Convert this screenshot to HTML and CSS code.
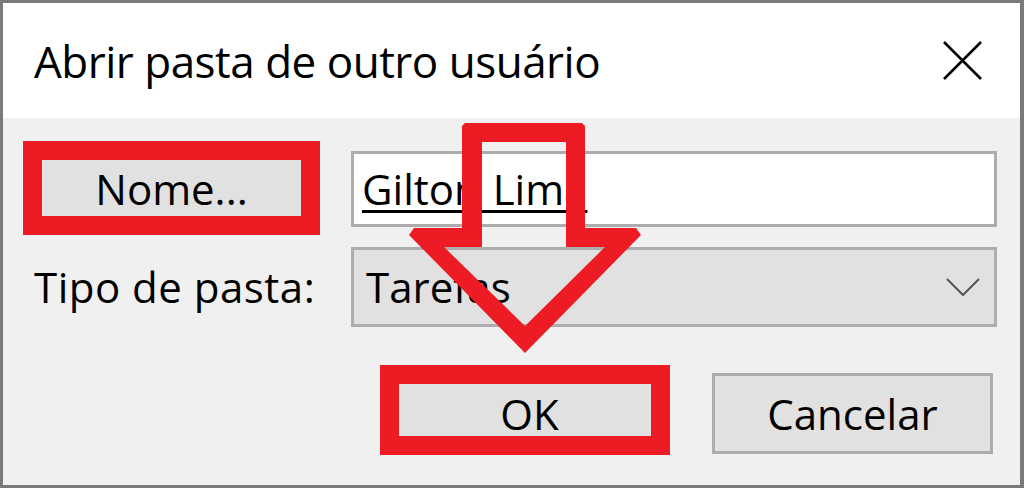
FILE: index.html
```html
<!DOCTYPE html>
<html>
<head lang="pt">
    <meta charset="UTF-8">
    <title>Abrir pasta de outro usuário</title>
    <link rel="stylesheet" href="styles.css">
</head>
<body>
    <div class="window">
        <div class="titlebar">
            <span class="title">Abrir pasta de outro usuário</span>
            <svg class="close" width="39" height="39" viewBox="0 0 39 39">
                <path d="M1 1L38 38M38 1L1 38" stroke="#000" stroke-width="2.6" fill="none"/>
            </svg>
        </div>
        <div class="content">
            <div class="form">
                <button class="btn marked mark-name">Nome...</button>
                <div class="field text-field"><u>Gilton Lima</u></div>
                <span class="label">Tipo de pasta:</span>
                <div class="field select">
                    <span>Tarefas</span>
                    <svg class="chevron" width="34" height="18" viewBox="0 0 34 18">
                        <path d="M1 1L17 17L33 1" stroke="#555" stroke-width="2" fill="none"/>
                    </svg>
                </div>
            </div>
            <div class="actions">
                <button class="btn marked mark-ok">OK</button>
                <button class="btn">Cancelar</button>
            </div>
        </div>
    </div>
    <!-- seta vermelha por cima do diálogo -->
    <svg class="arrow" width="1024" height="488" viewBox="0 0 1024 488">
        <path fill="#ed1c24" fill-rule="evenodd"
              d="M465 123H582L585 126V228H636L641 235L525 353L409 235L414 228H462V126Z
                 M482 142H566V247H605L525 326L444 247H482Z"/>
    </svg>
</body>
</html>
```

FILE: styles.css
```css
*{
    margin: 0;
    padding: 0;
    box-sizing: border-box;
}
body{
    width: 1024px;
    height: 488px;
    overflow: hidden;
    font-family: "Open Sans", "Noto Sans", sans-serif;
    color: #000;
}
.window{
    width: 1024px;
    height: 488px;
    border: 3px solid #7a7a7a;
    border-right-width: 4px;
    background: #f0f0f0;
    display: flex;
    flex-direction: column;
}
.titlebar{
    height: 115px;
    background: #fff;
    display: flex;
    align-items: center;
    justify-content: space-between;
    padding-left: 31px;
    padding-right: 38px;
}
.title{
    font-size: 44px;
    letter-spacing: -0.5px;
    line-height: 1;
}
.close{
    display: block;
}
.content{
    flex: 1;
    padding: 33px 23px 0 30px;
}
.form{
    display: grid;
    grid-template-columns: 277px 1fr;
    grid-template-rows: 76px 80px;
    column-gap: 41px;
    row-gap: 20px;
}
.btn{
    font-family: inherit;
    font-size: 42px;
    line-height: 1;
    color: #000;
    background: #e1e1e1;
    border: 3px solid #adadad;
    position: relative;
}
/* moldura vermelha de destaque */
.marked::after{
    content: "";
    position: absolute;
    border: 19px solid #ed1c24;
}
.mark-name::after{
    top: -13px;
    left: -13px;
    right: -13px;
    bottom: -11px;
}
.mark-ok::after{
    top: -11px;
    left: -12px;
    right: -3px;
    bottom: -4px;
}
.field{
    border: 3px solid #adadad;
    font-size: 42px;
    line-height: 1;
    display: flex;
    align-items: center;
}
.text-field{
    background: #fff;
    padding-left: 8px;
}
.text-field u{
    text-decoration-thickness: 3px;
    text-underline-offset: 5px;
    word-spacing: 2px;
}
.label{
    font-size: 42px;
    line-height: 1;
    letter-spacing: 0.5px;
    white-space: nowrap;
    display: flex;
    align-items: center;
    padding-left: 1px;
}
.select{
    background: #e1e1e1;
    justify-content: space-between;
    padding-left: 12px;
    padding-right: 14px;
}
.chevron{
    display: block;
}
.actions{
    margin-top: 46px;
    display: flex;
    justify-content: flex-end;
    gap: 42px;
    padding-right: 4px;
}
.actions .btn{
    width: 281px;
    height: 81px;
}
.arrow{
    position: absolute;
    left: 0;
    top: 0;
}
```
